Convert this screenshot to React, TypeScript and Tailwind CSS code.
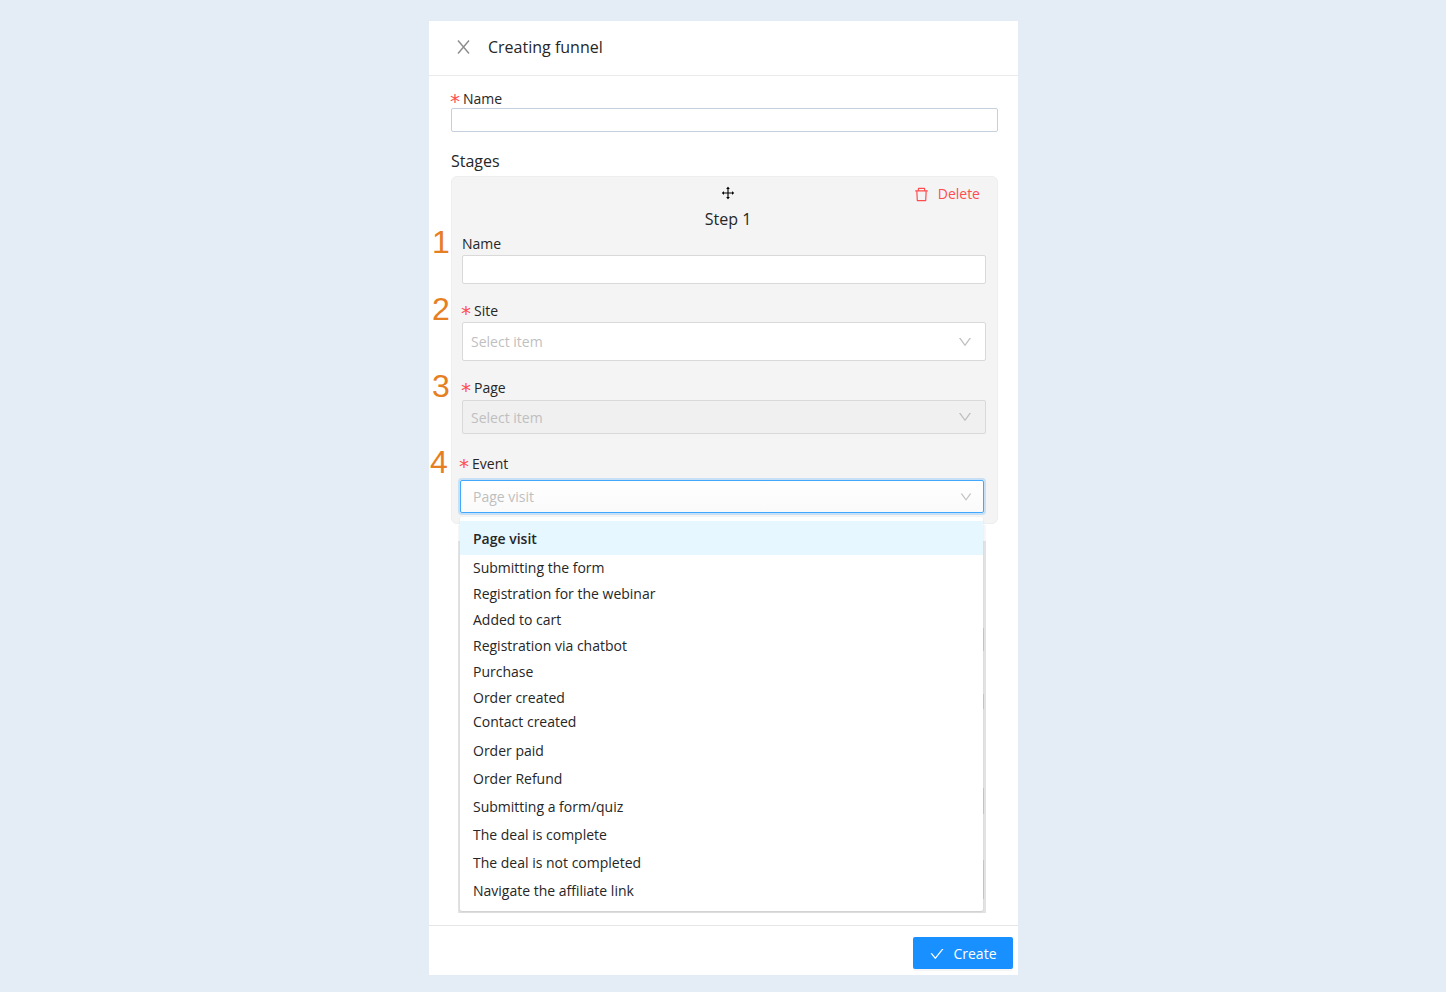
import React, { useState } from 'react'
import { AiOutlineCheck, AiOutlineDelete, AiOutlineDown, AiOutlineDrag } from 'react-icons/ai'

const mainEvents = [
  'Submitting the form',
  'Registration for the webinar',
  'Added to cart',
  'Registration via chatbot',
  'Purchase',
  'Order created',
]

const dealEvents = [
  'Order paid',
  'Order Refund',
  'Submitting a form/quiz',
  'The deal is complete',
  'The deal is not completed',
  'Navigate the affiliate link',
]

const Label = ({ id, text, required }: { id: string; text: string; required?: boolean }) => (
  <label htmlFor={id} className="flex h-5 items-center text-sm leading-5 text-[#262626]">
    {required && (
      <span className="mr-1 flex h-5 w-2 justify-center pt-0.5 font-['DejaVu_Sans'] text-xl leading-5 text-[#ff4d4f]">*</span>
    )}
    {text}
  </label>
)

const StepNumber = ({ value }: { value: number }) => (
  <span className="absolute -left-[30px] -top-[10px] w-[18px] text-center font-['Liberation_Sans',sans-serif] text-[32px] leading-9 text-[#e67e22]">
    {value}
  </span>
)

type SelectProps = {
  id: string
  placeholder: string
  className: string
  arrowClassName: string
  disabled?: boolean
}

const Select = ({ id, placeholder, className, arrowClassName, disabled }: SelectProps) => (
  <div className="relative">
    <select
      id={id}
      disabled={disabled}
      className={`block w-full appearance-none rounded-xs border text-sm text-[#bfbfbf] opacity-100 outline-none ${className}`}>
      <option>{placeholder}</option>
    </select>
    <AiOutlineDown className={`pointer-events-none absolute my-auto text-[#bfbfbf] ${arrowClassName}`} />
  </div>
)

const EventOption = ({ name, className, selected, onPick }: {
  name: string
  className: string
  selected: boolean
  onPick: (name: string) => void
}) => (
  <li role="option" aria-selected={selected}>
    <button
      type="button"
      onClick={() => onPick(name)}
      className={`flex w-full items-center px-[13px] text-left text-sm ${className}`}>
      {name}
    </button>
  </li>
)

const EventMenu = () => {
  const [picked, setPicked] = useState('Page visit')

  return (
    <div className="absolute -inset-x-0.5 top-[37px] z-10">
      <div className="absolute inset-x-0 -bottom-0.5 top-2 bg-[#f7f7f7]" />
      <div className="absolute inset-x-0 -bottom-0.5 top-6 bg-[#e3e3e3]" />
      <ul
        role="listbox"
        aria-label="Event"
        className="relative ml-0.5 mr-[3px] rounded-xs bg-white pb-1.5 pt-1 text-[#262626] shadow-[0_1px_2px_rgba(0,0,0,0.1)]">
        <EventOption
          name="Page visit"
          className="h-[34px] bg-[#e6f7ff] pt-0.5 font-semibold"
          selected={picked === 'Page visit'}
          onPick={setPicked}
        />
        {mainEvents.map((name) => (
          <EventOption key={name} name={name} className="h-[26px]" selected={picked === name} onPick={setPicked} />
        ))}
        <EventOption
          name="Contact created"
          className="h-[26px] pb-1"
          selected={picked === 'Contact created'}
          onPick={setPicked}
        />
        {dealEvents.map((name) => (
          <EventOption key={name} name={name} className="h-7" selected={picked === name} onPick={setPicked} />
        ))}
      </ul>
      <span className="absolute right-0.5 top-[111px] h-[23px] w-px bg-[#c4c4c4]" />
      <span className="absolute right-0.5 top-[177px] h-[15px] w-px bg-[#c4c4c4]" />
      <span className="absolute right-0.5 top-[271px] h-[26px] w-px bg-[#c4c4c4]" />
      <span className="absolute right-0.5 top-[343px] h-[39px] w-px bg-[#c4c4c4]" />
    </div>
  )
}

const StageCard = () => (
  <section className="relative rounded-md border border-[#eeeeee] bg-[#f4f4f4] pb-2.5 pl-2.5 pr-[11px] pt-1.5">
    <div className="flex flex-col items-center pl-2">
      <AiOutlineDrag className="mb-1.5 mt-0.5 h-4 w-4 text-black" />
      <h3 className="text-base leading-6 text-[#262626]">Step 1</h3>
    </div>
    <button type="button" className="absolute right-[17px] top-[7px] flex items-center gap-2 text-sm leading-5 text-[#ff4d4f]">
      <AiOutlineDelete size={17} />
      Delete
    </button>

    <div className="relative mt-[3px]">
      <StepNumber value={1} />
      <Label id="step-name" text="Name" />
      <input
        id="step-name"
        type="text"
        className="mt-px block h-[29px] w-full rounded-xs border border-[#d9d9d9] bg-white px-2 text-sm outline-none"
      />
    </div>

    <div className="relative mt-[17px]">
      <StepNumber value={2} />
      <Label id="step-site" text="Site" required />
      <div className="mt-px">
        <Select
          id="step-site"
          placeholder="Select item"
          className="h-[39px] border-[#d9d9d9] bg-white px-2"
          arrowClassName="inset-y-0 right-[13px] size-4"
        />
      </div>
    </div>

    <div className="relative mt-[17px]">
      <StepNumber value={3} />
      <Label id="step-page" text="Page" required />
      <div className="mt-0.5">
        <Select
          id="step-page"
          placeholder="Select item"
          className="h-[34px] border-[#d9d9d9] bg-[#f0f0f0] px-2 pt-0.5"
          arrowClassName="inset-y-0 right-[13px] size-4"
          disabled
        />
      </div>
    </div>

    <div className="relative -left-0.5 mt-5">
      <StepNumber value={4} />
      <Label id="step-event" text="Event" required />
      <div className="relative mt-1.5">
        <Select
          id="step-event"
          placeholder="Page visit"
          className="h-[33px] border-[#40a9ff] bg-linear-to-b from-white to-[#fafafa] px-3 shadow-[0_0_0_2px_rgba(24,144,255,0.2)]"
          arrowClassName="inset-y-0 right-[11px] size-3.5"
        />
        <EventMenu />
      </div>
    </div>
  </section>
)

export default function App() {
  return (
    <main className="flex min-h-screen justify-center bg-[#e4ecf6] pb-[17px] pl-px pt-[21px] font-['Open_Sans','Noto_Sans',sans-serif]">
      <form className="flex w-full max-w-[589px] flex-col bg-white" onSubmit={(e) => e.preventDefault()}>
        <header className="flex h-[55px] items-center gap-[18px] border-b border-[#ebebeb] pb-0.5 pl-7">
          <button type="button" aria-label="Close" className="text-[#8c8c8c]">
            <svg width="13" height="14" viewBox="0 0 13 14" fill="none" stroke="currentColor" strokeWidth="1.4">
              <path d="M1 .5 12 13.5M12 .5 1 13.5" />
            </svg>
          </button>
          <h1 className="text-base text-[#262626]">Creating funnel</h1>
        </header>

        <div className="grow pl-[22px] pr-5 pt-[13px]">
          <Label id="funnel-name" text="Name" required />
          <input
            id="funnel-name"
            type="text"
            className="-mt-px block h-6 w-full rounded-xs border border-[#c5d0dc] bg-white px-2 text-sm outline-none"
          />
          <h2 className="mb-[3px] mt-[17px] text-base leading-6 text-[#262626]">Stages</h2>
          <StageCard />
        </div>

        <footer className="flex h-[50px] items-start justify-end border-t border-[#e6e6e6] pr-[5px] pt-[11px]">
          <button
            type="submit"
            className="flex h-8 w-[100px] items-center justify-center gap-2 rounded-xs bg-[#1890ff] pt-0.5 text-sm text-white shadow-[0_2px_0_rgba(0,0,0,0.04)]">
            <AiOutlineCheck size={16} />
            Create
          </button>
        </footer>
      </form>
    </main>
  )
}
